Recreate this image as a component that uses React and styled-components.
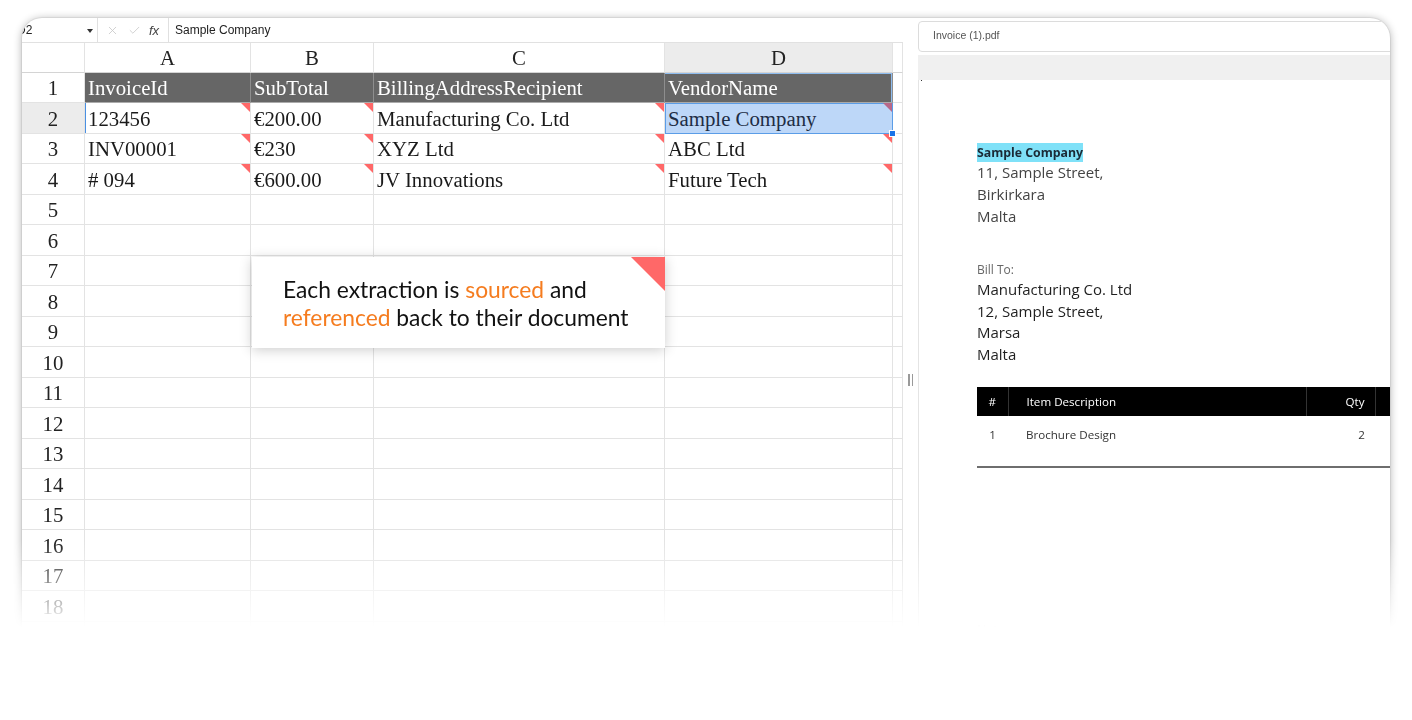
import React from "react";
import styled, { createGlobalStyle, css } from "styled-components";
import { X, Check } from "lucide-react";

const Global = createGlobalStyle`
  html, body { margin: 0; padding: 0; background: #fff; }
  body {
    width: 1412px;
    height: 720px;
    overflow: hidden;
    font-family: "Liberation Sans", Arial, sans-serif;
  }
`;

const Stage = styled.div`
  height: 720px;
  box-sizing: border-box;
  padding: 18px 22px 0 22px;
  overflow: hidden;
  -webkit-mask-image: linear-gradient(to bottom, #000 540px, rgba(0,0,0,0) 628px);
  mask-image: linear-gradient(to bottom, #000 540px, rgba(0,0,0,0) 628px);
`;

const Frame = styled.div`
  position: relative;
  display: flex;
  height: 700px;
  background: #fff;
  border-radius: 20px 20px 0 0;
  box-shadow: 0 0 0 1px rgba(0, 0, 0, 0.05), 0 1px 9px rgba(0, 0, 0, 0.32);
  overflow: hidden;
`;

/* ---------- spreadsheet ---------- */

const Sheet = styled.div`
  flex: 0 0 881px;
  display: flex;
  flex-direction: column;
`;

const FormulaBar = styled.div`
  display: flex;
  height: 24px;
  border-bottom: 1px solid #e1e1e1;
  font-family: "Liberation Sans", Arial, sans-serif;
  font-size: 12px;
  color: #222;
`;

const NameBox = styled.div`
  box-sizing: border-box;
  flex: 0 0 76px;
  display: flex;
  align-items: center;
  justify-content: space-between;
  padding-right: 4px;
  border-right: 1px solid #e0e0e0;
`;

const NameText = styled.span`
  margin-left: -5px;
`;

const DropCaret = styled.span`
  width: 0;
  height: 0;
  margin-top: 2px;
  border-left: 3px solid transparent;
  border-right: 3px solid transparent;
  border-top: 4px solid #333;
`;

const FxTools = styled.div`
  display: flex;
  align-items: center;
  gap: 8.5px;
  padding: 0 9px 0 8px;
  border-right: 1px solid #e0e0e0;
  color: #c8c8c8;
`;

const FxLabel = styled.span`
  font-family: "Liberation Sans", Arial, sans-serif;
  font-style: italic;
  font-size: 13px;
  color: #444;
  width: 10px;
`;

const FormulaText = styled.div`
  display: flex;
  align-items: center;
  padding-left: 6px;
`;

const Grid = styled.div`
  display: grid;
  grid-template-columns: 63px 166px 123px 291px 228px 10px;
  grid-template-rows: 29.5px repeat(20, 30.5px);
`;

const Cell = styled.div`
  position: relative;
  box-sizing: border-box;
  display: flex;
  align-items: center;
  min-width: 0;
  padding-top: 2px;
  overflow: hidden;
  white-space: nowrap;
  border-right: 1px solid #e3e3e3;
  border-bottom: 1px solid #e3e3e3;
  font-family: "Liberation Serif", "Times New Roman", serif;
  font-size: 20.8px;
  color: #1a1a1a;
`;

const ColLetter = styled(Cell)`
  justify-content: center;
  padding-top: 1px;
  background: ${(p) => (p.$active ? "#ececec" : "#fff")};
  color: #222;
  border-bottom-color: #d4d4d4;
`;

const RowNum = styled(Cell)`
  justify-content: center;
  background: ${(p) => (p.$active ? "#ececec" : "#fff")};
  color: #222;
`;

const HeadCell = styled(Cell)`
  padding-left: 3px;
  background: #666;
  color: #fff;
  border-right-color: #8e8e8e;
  border-bottom-color: #ababab;
  ${(p) =>
    p.$active &&
    css`
      box-shadow: inset 0 1px 0 #8fbdf0, inset -1px 0 0 #8fbdf0;
    `}
`;

const DataCell = styled(Cell)`
  padding-left: 3px;
  ${(p) =>
    p.$markLeft &&
    css`
      box-shadow: inset 1px 0 0 #4a90e2;
    `}
  ${(p) =>
    p.$flag &&
    css`
      &::after {
        content: "";
        position: absolute;
        top: 0;
        right: 0;
        border-top: 9px solid ${p.$selected ? "#b8688a" : "#ff6868"};
        border-left: 9px solid transparent;
      }
    `}
  ${(p) =>
    p.$selected &&
    css`
      overflow: visible;
      z-index: 2;
      background: #bdd7f8;
      color: #1d2d45;
      border-right-color: #5b9de7;
      border-bottom-color: #5b9de7;
      box-shadow: inset 1px 1px 0 #5b9de7;
      &::before {
        content: "";
        position: absolute;
        right: -3px;
        bottom: -3px;
        width: 5px;
        height: 5px;
        background: #1a73e8;
        box-shadow: 0 0 0 1px #fff;
      }
    `}
`;

/* ---------- splitter ---------- */

const Splitter = styled.div`
  flex: 0 0 15px;
  display: flex;
  justify-content: center;
  padding-top: 356px;
  box-sizing: border-box;
`;

const Grip = styled.div`
  display: flex;
  gap: 2px;
  height: 12px;
  & > span {
    width: 1.5px;
    background: #9a9a9a;
  }
`;

/* ---------- pdf viewer ---------- */

const PdfPanel = styled.div`
  flex: 1;
  min-width: 0;
  display: flex;
  flex-direction: column;
  overflow: hidden;
`;

const PdfHeader = styled.div`
  box-sizing: border-box;
  height: 31px;
  margin: 3px -10px 0 0;
  padding: 0 0 3px 14px;
  display: flex;
  align-items: center;
  border: 1px solid #dcdcdc;
  border-radius: 4px;
  font-family: "Liberation Sans", Arial, sans-serif;
  font-size: 10.5px;
  color: #555;
`;

const PdfToolbar = styled.div`
  height: 25px;
  margin-top: 3px;
  background: #f0f0f0;
`;

const PdfPage = styled.div`
  position: relative;
  flex: 1;
  border-left: 1px solid #e4e4e4;
  padding: 65px 0 0 58px;
  font-family: "Open Sans", "Noto Sans", sans-serif;
  &::before {
    content: "";
    position: absolute;
    left: 2px;
    top: 0;
    width: 1px;
    height: 1px;
    background: #333;
  }
`;

const CompanyLine = styled.div`
  line-height: 16px;
  font-size: 12.3px;
  font-weight: 700;
  color: #1b2a36;
`;

const Highlight = styled.span`
  background: #7fe1f8;
  padding: 1px 0;
`;

const AddrBlock = styled.div`
  font-size: 15px;
  line-height: ${(p) => (p.$dense ? "21.7px" : "22px")};
  color: ${(p) => (p.$dark ? "#1f1f1f" : "#444")};
`;

const BillLabel = styled.div`
  margin-top: 34px;
  font-size: 12px;
  line-height: 18px;
  color: #666;
`;

const ItemTable = styled.table`
  margin-top: 21px;
  width: 520px;
  border-collapse: collapse;
  table-layout: fixed;
  font-size: 11.6px;
`;

const Th = styled.th`
  height: 29px;
  padding: 0 ${(p) => (p.$align === "right" ? "10px" : "0")} 0
    ${(p) => (p.$align === "left" ? "18px" : "0")};
  background: #000;
  color: #fff;
  font-weight: 400;
  text-align: ${(p) => p.$align || "center"};
  border-right: 1px solid #333;
`;

const Td = styled.td`
  height: 40px;
  vertical-align: top;
  padding: 10px ${(p) => (p.$align === "right" ? "10px" : "0")} 0
    ${(p) => (p.$align === "left" ? "18px" : "0")};
  line-height: 18px;
  color: #333;
  text-align: ${(p) => p.$align || "center"};
  border-bottom: 2px solid #6e6e6e;
`;

const Notes = styled.div`
  margin-top: 153px;
  font-size: 12px;
  color: #999;
`;

/* ---------- callout ---------- */

const Callout = styled.div`
  position: absolute;
  left: 230px;
  top: 239px;
  width: 413px;
  height: 91px;
  box-sizing: border-box;
  display: flex;
  align-items: center;
  padding-left: 31px;
  background: #fff;
  box-shadow: 0 2px 12px rgba(0, 0, 0, 0.2);
  font-family: Lato, "Open Sans", sans-serif;
  font-size: 22.8px;
  line-height: 28px;
  color: #111;
  &::after {
    content: "";
    position: absolute;
    top: 0;
    right: 0;
    border-top: 34px solid #ff6868;
    border-left: 34px solid transparent;
  }
`;

const Accent = styled.span`
  color: #f57c1f;
`;

/* ---------- data ---------- */

const headers = ["InvoiceId", "SubTotal", "BillingAddressRecipient", "VendorName"];
const rows = [
  ["123456", "€200.00", "Manufacturing Co. Ltd", "Sample Company"],
  ["INV00001", "€230", "XYZ Ltd", "ABC Ltd"],
  ["# 094", "€600.00", "JV Innovations", "Future Tech"],
];
const letters = ["A", "B", "C", "D"];
const TOTAL_ROWS = 20;

function SheetGrid() {
  const cells = [];
  cells.push(<ColLetter key="corner" />);
  letters.forEach((l, i) =>
    cells.push(
      <ColLetter key={"L" + l} $active={i === 3}>
        {l}
      </ColLetter>
    )
  );
  cells.push(<ColLetter key="Lx" />);

  for (let r = 1; r <= TOTAL_ROWS; r++) {
    cells.push(
      <RowNum key={"n" + r} $active={r === 2}>
        {r}
      </RowNum>
    );
    if (r === 1) {
      headers.forEach((h, i) =>
        cells.push(
          <HeadCell key={"h" + i} $active={i === 3}>
            {h}
          </HeadCell>
        )
      );
    } else {
      const data = rows[r - 2];
      for (let c = 0; c < 4; c++) {
        cells.push(
          <DataCell
            key={r + "-" + c}
            $flag={!!data}
            $selected={r === 2 && c === 3}
            $markLeft={r === 2 && c === 0}
          >
            {data ? data[c] : ""}
          </DataCell>
        );
      }
    }
    cells.push(<Cell key={"x" + r} />);
  }
  return <Grid>{cells}</Grid>;
}

export default function App() {
  return (
    <>
      <Global />
      <Stage>
        <Frame>
          <Sheet>
            <FormulaBar>
              <NameBox>
                <NameText>D2</NameText>
                <DropCaret />
              </NameBox>
              <FxTools>
                <X size={13} strokeWidth={1.5} />
                <Check size={13} strokeWidth={1.5} />
                <FxLabel>fx</FxLabel>
              </FxTools>
              <FormulaText>Sample Company</FormulaText>
            </FormulaBar>
            <SheetGrid />
          </Sheet>

          <Splitter>
            <Grip>
              <span />
              <span />
            </Grip>
          </Splitter>

          <PdfPanel>
            <PdfHeader>Invoice (1).pdf</PdfHeader>
            <PdfToolbar />
            <PdfPage>
              <CompanyLine>
                <Highlight>Sample Company</Highlight>
              </CompanyLine>
              <AddrBlock>
                <div>11, Sample Street,</div>
                <div>Birkirkara</div>
                <div>Malta</div>
              </AddrBlock>
              <BillLabel>Bill To:</BillLabel>
              <AddrBlock $dark $dense>
                <div>Manufacturing Co. Ltd</div>
                <div>12, Sample Street,</div>
                <div>Marsa</div>
                <div>Malta</div>
              </AddrBlock>
              <ItemTable>
                <colgroup>
                  <col style={{ width: 31 }} />
                  <col style={{ width: 298 }} />
                  <col style={{ width: 69 }} />
                  <col style={{ width: 122 }} />
                </colgroup>
                <thead>
                  <tr>
                    <Th>#</Th>
                    <Th $align="left">Item Description</Th>
                    <Th $align="right">Qty</Th>
                    <Th />
                  </tr>
                </thead>
                <tbody>
                  <tr>
                    <Td>1</Td>
                    <Td $align="left">Brochure Design</Td>
                    <Td $align="right">2</Td>
                    <Td />
                  </tr>
                </tbody>
              </ItemTable>
              <Notes>Notes</Notes>
            </PdfPage>
          </PdfPanel>

          <Callout>
            <div>
              Each extraction is <Accent>sourced</Accent> and
              <br />
              <Accent>referenced</Accent> back to their document
            </div>
          </Callout>
        </Frame>
      </Stage>
    </>
  );
}
